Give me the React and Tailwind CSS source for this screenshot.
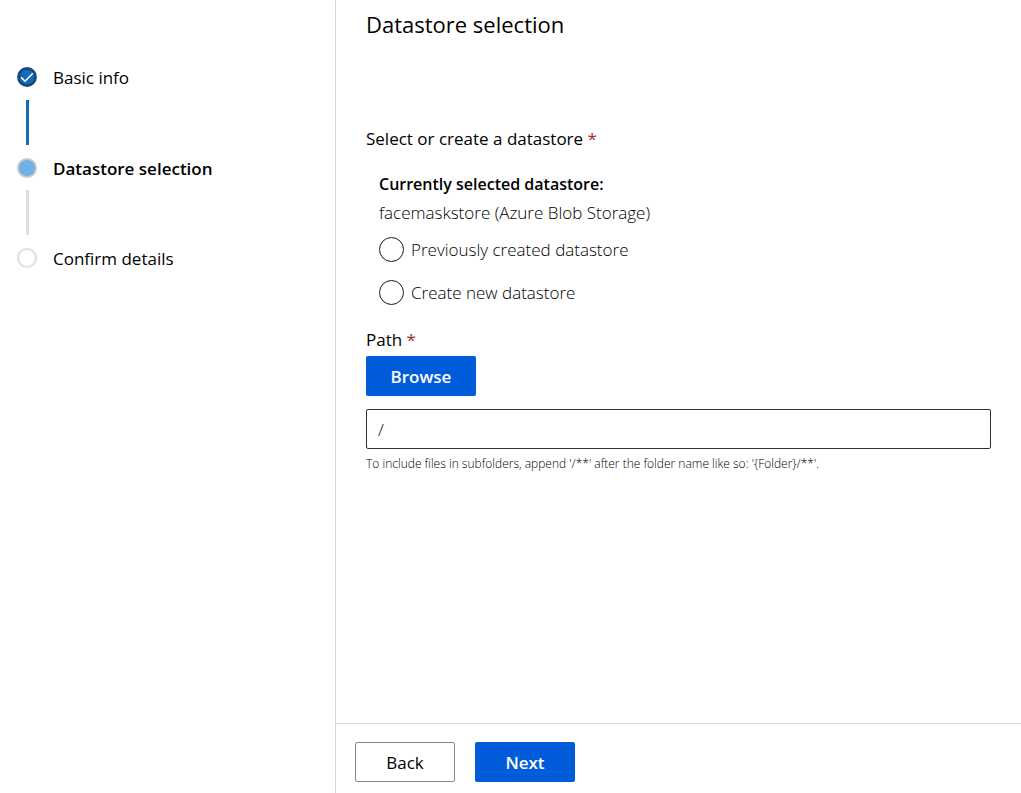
import { useState } from "react";

function StepMarker({ status }) {
  if (status === "done") {
    return (
      <svg viewBox="0 0 20 20" className="size-5 shrink-0" aria-hidden="true">
        <circle cx="10" cy="10" r="8.6" fill="#1a69b5" stroke="#0f4a84" strokeWidth="2.6" />
        <path d="M4.2 10.4 8 14.2 15.8 6.2" fill="none" stroke="#fff" strokeWidth="1.5" />
      </svg>
    );
  }
  if (status === "current") {
    return <span className="size-5 shrink-0 rounded-full border-2 border-[#c8c8c8] bg-[#6fb0e8]" />;
  }
  return <span className="size-5 shrink-0 rounded-full border-2 border-[#dedede] bg-white" />;
}

function Step({ label, status, last }) {
  return (
    <li aria-current={status === "current" ? "step" : undefined}>
      <div className="flex h-5 items-center gap-4">
        <StepMarker status={status} />
        <span className={status === "current" ? "pt-0.5 font-semibold" : "pt-0.5"}>{label}</span>
      </div>
      {!last && (
        <div
          className={
            status === "done"
              ? "my-[13px] ml-[9px] h-[45px] w-[3px] bg-[#1a69b5]"
              : "mt-3 mb-[13px] ml-[9px] h-[45px] w-[3px] bg-[#dedede]"
          }
        />
      )}
    </li>
  );
}

function RadioOption({ value, label, selected, onSelect }) {
  return (
    <label className="flex items-center gap-[7px]">
      <input
        type="radio"
        name="datastore"
        value={value}
        checked={selected === value}
        onChange={() => onSelect(value)}
        className="size-[25px] shrink-0 appearance-none rounded-full border border-[#1b1a19] checked:border-8 checked:border-[#015cda]"
      />
      <span className="font-light">{label}</span>
    </label>
  );
}

export default function App() {
  const [source, setSource] = useState("");
  const [path, setPath] = useState("/");

  return (
    <div className="flex min-h-screen bg-white font-['Open_Sans','Noto_Sans',sans-serif] text-[17px] leading-6 text-black">
      <nav aria-label="Progress" className="w-84 shrink-0 border-r border-[#d6d6d6] pt-[67px] pl-[17px]">
        <ol>
          <Step label="Basic info" status="done" />
          <Step label="Datastore selection" status="current" />
          <Step label="Confirm details" status="upcoming" last />
        </ol>
      </nav>

      <div className="flex min-w-0 grow flex-col">
        <main className="grow px-[30px] pt-2">
          <h1 className="text-[22px] leading-8">Datastore selection</h1>

          <fieldset className="pt-[87px]">
            <legend className="contents">
              Select or create a datastore <span className="text-[#a4262c]">*</span>
            </legend>
            <div className="flex flex-col pt-[21px] pl-[13px]">
              <p className="text-base leading-6 font-semibold">Currently selected datastore:</p>
              <p className="pt-[5px] font-light">facemaskstore (Azure Blob Storage)</p>
              <div className="flex flex-col gap-[18px] pt-3">
                <RadioOption value="previous" label="Previously created datastore" selected={source} onSelect={setSource} />
                <RadioOption value="new" label="Create new datastore" selected={source} onSelect={setSource} />
              </div>
            </div>
          </fieldset>

          <div className="pt-[23px]">
            <label htmlFor="path" className="block">
              Path <span className="text-[#a4262c]">*</span>
            </label>
            <button type="button" className="mt-1 h-10 w-[110px] rounded-xs bg-[#015cda] pt-0.5 font-semibold text-white">
              Browse
            </button>
            <input
              id="path"
              type="text"
              value={path}
              onChange={(e) => setPath(e.target.value)}
              className="mt-[13px] block h-10 w-full rounded-xs border border-[#323130] px-[11px] font-light"
            />
            <p className="pt-[7px] text-xs leading-4 font-light">
              To include files in subfolders, append '/**' after the folder name like so: '{"{Folder}"}/**'.
            </p>
          </div>
        </main>

        <footer className="flex gap-5 border-t border-[#d6d6d6] px-[19px] pt-[18px] pb-[11px]">
          <button type="button" className="h-10 w-25 rounded-xs border border-[#8a8886] pt-0.5">
            Back
          </button>
          <button type="button" className="h-10 w-25 rounded-xs bg-[#015cda] pt-0.5 font-semibold text-white">
            Next
          </button>
        </footer>
      </div>
    </div>
  );
}
